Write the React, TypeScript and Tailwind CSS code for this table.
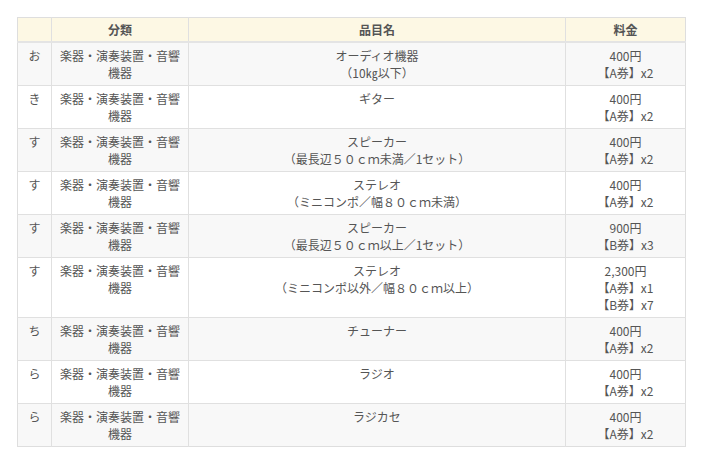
import React from "react";

type Row = { k: string; name: string[]; price: string[] };

const rows: Row[] = [
  { k: "お", name: ["オーディオ機器", "（10㎏以下）"], price: ["400円", "【A券】x2"] },
  { k: "き", name: ["ギター"], price: ["400円", "【A券】x2"] },
  { k: "す", name: ["スピーカー", "（最長辺５０ｃｍ未満／1セット）"], price: ["400円", "【A券】x2"] },
  { k: "す", name: ["ステレオ", "（ミニコンポ／幅８０ｃｍ未満）"], price: ["400円", "【A券】x2"] },
  { k: "す", name: ["スピーカー", "（最長辺５０ｃｍ以上／1セット）"], price: ["900円", "【B券】x3"] },
  { k: "す", name: ["ステレオ", "（ミニコンポ以外／幅８０ｃｍ以上）"], price: ["2,300円", "【A券】x1", "【B券】x7"] },
  { k: "ち", name: ["チューナー"], price: ["400円", "【A券】x2"] },
  { k: "ら", name: ["ラジオ"], price: ["400円", "【A券】x2"] },
  { k: "ら", name: ["ラジカセ"], price: ["400円", "【A券】x2"] },
];

export default function App() {
  return (
    <div
      className="w-[720px] h-[454px] bg-white pl-[17px] pt-[17px] text-[#555] text-[12px] leading-[17px]"
      style={{ fontFamily: '"Noto Sans CJK JP", "Noto Sans", sans-serif' }}
    >
      <table className="w-[668px] border-collapse border border-[#dedede] table-fixed">
        <colgroup>
          <col className="w-[34px]" />
          <col className="w-[137px]" />
          <col className="w-[377px]" />
          <col className="w-[120px]" />
        </colgroup>
        <thead>
          <tr className="bg-[#fdf8e4] border-b-2 border-[#e4e4e4]">
            <th className="border-r border-[#e0e0e0] py-[3px] font-bold"></th>
            <th className="border-r border-[#e0e0e0] py-[3px] font-bold text-center">分類</th>
            <th className="border-r border-[#e0e0e0] py-[3px] font-bold text-center">品目名</th>
            <th className="py-[3px] font-bold text-center">料金</th>
          </tr>
        </thead>
        <tbody>
          {rows.map((r, i) => (
            <tr
              key={i}
              className={(i % 2 === 0 ? "bg-[#f8f8f8]" : "bg-white") + " border-t border-[#e0e0e0] align-top"}
            >
              <td className="border-r border-[#e0e0e0] py-1 text-center">{r.k}</td>
              <td className="border-r border-[#e0e0e0] py-1 px-2 text-center">
                楽器・演奏装置・音響
                <br />
                機器
              </td>
              <td className="border-r border-[#e0e0e0] py-1 text-center">
                {r.name.map((n, j) => (
                  <div key={j}>{n}</div>
                ))}
              </td>
              <td className="py-1 text-center">
                {r.price.map((p, j) => (
                  <div key={j}>{p}</div>
                ))}
              </td>
            </tr>
          ))}
        </tbody>
      </table>
    </div>
  );
}
